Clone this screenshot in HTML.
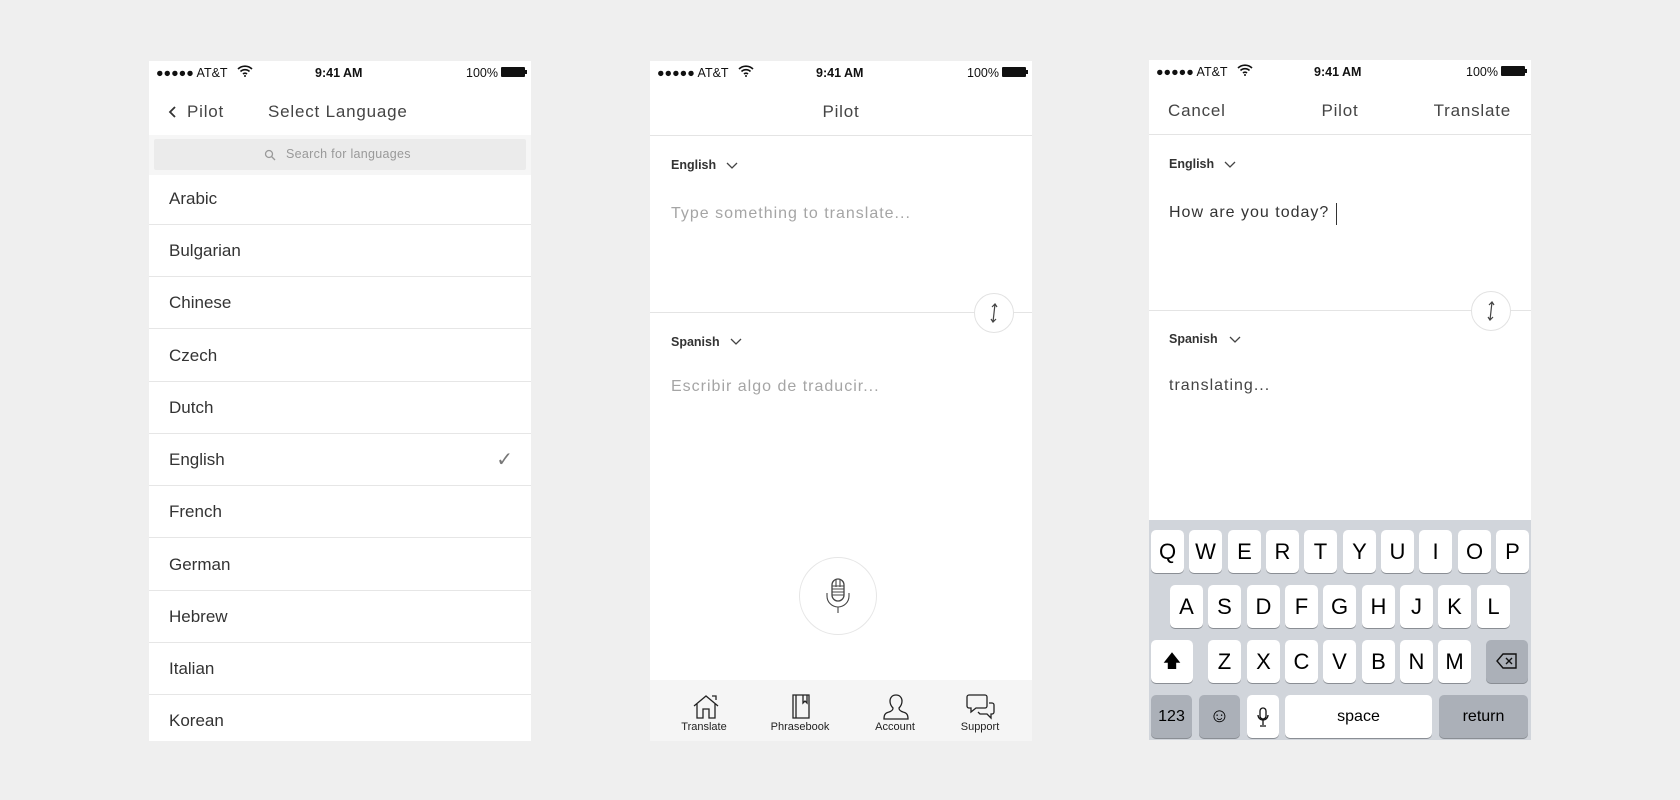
<!DOCTYPE html>
<html><head><meta charset="utf-8"><style>
*{margin:0;padding:0;box-sizing:border-box}
body{width:1680px;height:800px;background:#efefef;position:relative;overflow:hidden;font-family:"Liberation Sans",sans-serif;color:#333}
.ph{position:absolute;top:61px;width:382px;height:680px;background:#fff;overflow:hidden}
.a{position:absolute;white-space:nowrap}
.sb{font-size:12.5px;color:#111;top:5px}
.sep{position:absolute;left:0;right:0;height:1px;background:#e4e4e4}
.row{position:absolute;left:0;right:0;height:52px;border-bottom:1px solid #e6e6e6;font-size:17px;color:#333;padding-left:20px;line-height:52px}
.k{position:absolute;width:33px;height:43px;background:#fff;border-radius:5px;box-shadow:0 1px 0 #8a8e94;font-size:22px;color:#000;text-align:center;line-height:43px}
.g{background:#abb0b8}
.tab{position:absolute;top:45px;font-size:11px;color:#222;transform:translateX(-50%)}
.nav{font-size:17px;color:#444;letter-spacing:.8px}
.ph16{font-size:16px;letter-spacing:1px}
</style></head><body>

<!-- Phone 1 -->
<div class="ph" style="left:149px">
  <div class="a sb" style="left:7px">●●●●● AT&amp;T</div>
  <svg class="a" style="left:88px;top:4px" width="16" height="12" viewBox="0 0 16 12"><path d="M1 4a10 10 0 0 1 14 0M3.5 6.5a6.5 6.5 0 0 1 9 0M6 9a3 3 0 0 1 4 0" stroke="#111" stroke-width="1.6" fill="none"/><circle cx="8" cy="11" r="1" fill="#111"/></svg>
  <div class="a sb" style="left:166px;font-weight:bold">9:41 AM</div>
  <div class="a sb" style="left:317px">100%</div>
  <div class="a" style="left:352px;top:6px;width:24px;height:10px;background:#111;border-radius:1px"></div>
  <div class="a" style="left:376px;top:9px;width:2px;height:4px;background:#111"></div>
  <svg class="a" style="left:19px;top:44px" width="10" height="14" viewBox="0 0 10 14"><path d="M7 2L2 7l5 5" stroke="#333" stroke-width="1.8" fill="none"/></svg>
  <div class="a nav" style="left:38px;top:41px">Pilot</div>
  <div class="a nav" style="left:119px;top:41px">Select Language</div>
  <div class="a" style="left:0;right:0;top:74px;height:40px;background:#f6f6f6"></div>
  <div class="a" style="left:5px;right:5px;top:78px;height:31px;background:#ebebeb;border-radius:2px"></div>
  <svg class="a" style="left:115px;top:88px" width="12" height="12" viewBox="0 0 12 12"><circle cx="5" cy="5" r="3.5" stroke="#999" stroke-width="1.3" fill="none"/><path d="M7.5 7.5L11 11" stroke="#999" stroke-width="1.3"/></svg>
  <div class="a" style="left:137px;top:86px;font-size:12.5px;color:#999;letter-spacing:.3px">Search for languages</div>
  <div class="row" style="top:112px">Arabic</div>
  <div class="row" style="top:164px">Bulgarian</div>
  <div class="row" style="top:216px">Chinese</div>
  <div class="row" style="top:269px">Czech</div>
  <div class="row" style="top:321px">Dutch</div>
  <div class="row" style="top:373px">English<span style="position:absolute;right:18px;color:#777;font-size:20px">✓</span></div>
  <div class="row" style="top:425px">French</div>
  <div class="row" style="top:478px">German</div>
  <div class="row" style="top:530px">Hebrew</div>
  <div class="row" style="top:582px">Italian</div>
  <div class="row" style="top:634px;border:0">Korean</div>
</div>

<!-- Phone 2 -->
<div class="ph" style="left:650px">
  <div class="a sb" style="left:7px">●●●●● AT&amp;T</div>
  <svg class="a" style="left:88px;top:4px" width="16" height="12" viewBox="0 0 16 12"><path d="M1 4a10 10 0 0 1 14 0M3.5 6.5a6.5 6.5 0 0 1 9 0M6 9a3 3 0 0 1 4 0" stroke="#111" stroke-width="1.6" fill="none"/><circle cx="8" cy="11" r="1" fill="#111"/></svg>
  <div class="a sb" style="left:166px;font-weight:bold">9:41 AM</div>
  <div class="a sb" style="left:317px">100%</div>
  <div class="a" style="left:352px;top:6px;width:24px;height:10px;background:#111;border-radius:1px"></div>
  <div class="a" style="left:376px;top:9px;width:2px;height:4px;background:#111"></div>
  <div class="a nav" style="left:0;right:0;top:41px;text-align:center">Pilot</div>
  <div class="sep" style="top:74px"></div>
  <div class="a" style="left:21px;top:97px;font-size:12.5px;color:#333;font-weight:bold">English</div>
  <svg class="a" style="left:76px;top:101px" width="12" height="8" viewBox="0 0 12 8"><path d="M1 1l5 5 5-5" stroke="#444" stroke-width="1.3" fill="none"/></svg>
  <div class="a ph16" style="left:21px;top:144px;color:#a5a5a5">Type something to translate...</div>
  <div class="sep" style="top:251px"></div>
  <div class="a" style="left:324px;top:232px;width:40px;height:40px;border-radius:50%;background:#fff;border:1px solid #e2e2e2"></div>
  <svg class="a" style="left:336px;top:241px" width="16" height="22" viewBox="0 0 16 22"><path d="M9 2L7 20M6 5l3-3 2 3M5 17l2 3 3-3" stroke="#444" stroke-width="1.2" fill="none"/></svg>
  <div class="a" style="left:21px;top:274px;font-size:12.5px;color:#333;font-weight:bold">Spanish</div>
  <svg class="a" style="left:80px;top:277px" width="12" height="8" viewBox="0 0 12 8"><path d="M1 1l5 5 5-5" stroke="#444" stroke-width="1.3" fill="none"/></svg>
  <div class="a ph16" style="left:21px;top:317px;color:#a5a5a5">Escribir algo de traducir...</div>
  <div class="a" style="left:149px;top:496px;width:78px;height:78px;border-radius:50%;border:1px solid #e6e6e6"></div>
  <svg class="a" style="left:174px;top:517px" width="28" height="36" viewBox="0 0 28 36"><rect x="8" y="1" width="12" height="22" rx="6" stroke="#444" stroke-width="1.3" fill="none"/><path d="M8 8h12M8 11h12M8 14h12M8 17h12M12 1v8M16 1v8M3 15v3a11 11 0 0 0 22 0v-3M14 29v6" stroke="#444" stroke-width="1.1" fill="none"/></svg>
  <div class="a" style="left:0;right:0;top:619px;height:61px;background:#f5f5f5"></div>
  <svg class="a" style="left:42px;top:633px" width="28" height="26" viewBox="0 0 28 26"><path d="M2 12L14 2l12 10M5 10v14h6v-9h6v9h6V10M20 2h4v4" stroke="#222" stroke-width="1.3" fill="none"/></svg>
  <svg class="a" style="left:140px;top:632px" width="22" height="26" viewBox="0 0 22 26"><path d="M3 2h16v23H3zM6 2v23M13 2v8l2-2 2 2V2" stroke="#222" stroke-width="1.3" fill="none"/></svg>
  <svg class="a" style="left:232px;top:632px" width="28" height="27" viewBox="0 0 28 27"><path d="M14 2c-4 0-6 3-6 6s1 5 3 7c0 2-1 3-4 4-4 1-5 3-5 7h24c0-4-1-6-5-7-3-1-4-2-4-4 2-2 3-4 3-7s-2-6-6-6z" stroke="#222" stroke-width="1.3" fill="none"/></svg>
  <svg class="a" style="left:316px;top:632px" width="30" height="27" viewBox="0 0 30 27"><path d="M3 2h16a2 2 0 0 1 2 2v9a2 2 0 0 1-2 2H10l-5 4v-4H3a2 2 0 0 1-2-2V4a2 2 0 0 1 2-2zM23 10h3a2 2 0 0 1 2 2v7a2 2 0 0 1-2 2h-1v4l-4-4h-7l-2-2" stroke="#222" stroke-width="1.3" fill="none"/></svg>
  <div class="tab" style="left:54px;top:660px">Translate</div>
  <div class="tab" style="left:150px;top:660px">Phrasebook</div>
  <div class="tab" style="left:245px;top:660px">Account</div>
  <div class="tab" style="left:330px;top:660px">Support</div>
</div>

<!-- Phone 3 -->
<div class="ph" style="left:1149px;top:60px">
  <div class="a sb" style="left:7px">●●●●● AT&amp;T</div>
  <svg class="a" style="left:88px;top:4px" width="16" height="12" viewBox="0 0 16 12"><path d="M1 4a10 10 0 0 1 14 0M3.5 6.5a6.5 6.5 0 0 1 9 0M6 9a3 3 0 0 1 4 0" stroke="#111" stroke-width="1.6" fill="none"/><circle cx="8" cy="11" r="1" fill="#111"/></svg>
  <div class="a sb" style="left:165px;font-weight:bold">9:41 AM</div>
  <div class="a sb" style="left:317px">100%</div>
  <div class="a" style="left:352px;top:6px;width:24px;height:10px;background:#111;border-radius:1px"></div>
  <div class="a" style="left:376px;top:9px;width:2px;height:4px;background:#111"></div>
  <div class="a nav" style="left:19px;top:41px">Cancel</div>
  <div class="a nav" style="left:0;right:0;top:41px;text-align:center">Pilot</div>
  <div class="a nav" style="right:20px;top:41px">Translate</div>
  <div class="sep" style="top:74px"></div>
  <div class="a" style="left:20px;top:97px;font-size:12.5px;color:#333;font-weight:bold">English</div>
  <svg class="a" style="left:75px;top:101px" width="12" height="8" viewBox="0 0 12 8"><path d="M1 1l5 5 5-5" stroke="#444" stroke-width="1.3" fill="none"/></svg>
  <div class="a ph16" style="left:20px;top:144px;color:#333">How are you today?</div>
  <div class="a" style="left:187px;top:143px;width:1px;height:22px;background:#333"></div>
  <div class="sep" style="top:250px"></div>
  <div class="a" style="left:322px;top:231px;width:40px;height:40px;border-radius:50%;background:#fff;border:1px solid #e2e2e2"></div>
  <svg class="a" style="left:334px;top:240px" width="16" height="22" viewBox="0 0 16 22"><path d="M9 2L7 20M6 5l3-3 2 3M5 17l2 3 3-3" stroke="#444" stroke-width="1.2" fill="none"/></svg>
  <div class="a" style="left:20px;top:272px;font-size:12.5px;color:#333;font-weight:bold">Spanish</div>
  <svg class="a" style="left:80px;top:276px" width="12" height="8" viewBox="0 0 12 8"><path d="M1 1l5 5 5-5" stroke="#444" stroke-width="1.3" fill="none"/></svg>
  <div class="a ph16" style="left:20px;top:317px;color:#444">translating...</div>
  <div class="a" style="left:0;right:0;top:460px;height:220px;background:#d1d5db">
    <div class="k" style="left:2px;top:10px">Q</div><div class="k" style="left:40px;top:10px">W</div><div class="k" style="left:79px;top:10px">E</div><div class="k" style="left:117px;top:10px">R</div><div class="k" style="left:155px;top:10px">T</div><div class="k" style="left:194px;top:10px">Y</div><div class="k" style="left:232px;top:10px">U</div><div class="k" style="left:270px;top:10px">I</div><div class="k" style="left:309px;top:10px">O</div><div class="k" style="left:347px;top:10px">P</div>
    <div class="k" style="left:21px;top:65px">A</div><div class="k" style="left:59px;top:65px">S</div><div class="k" style="left:98px;top:65px">D</div><div class="k" style="left:136px;top:65px">F</div><div class="k" style="left:174px;top:65px">G</div><div class="k" style="left:213px;top:65px">H</div><div class="k" style="left:251px;top:65px">J</div><div class="k" style="left:289px;top:65px">K</div><div class="k" style="left:328px;top:65px">L</div>
    <div class="k" style="left:2px;top:120px;width:42px;font-size:18px">🡅</div>
    <div class="k" style="left:59px;top:120px">Z</div><div class="k" style="left:98px;top:120px">X</div><div class="k" style="left:136px;top:120px">C</div><div class="k" style="left:174px;top:120px">V</div><div class="k" style="left:213px;top:120px">B</div><div class="k" style="left:251px;top:120px">N</div><div class="k" style="left:289px;top:120px">M</div>
    <div class="k g" style="left:337px;top:120px;width:42px"><svg width="22" height="16" viewBox="0 0 22 16" style="margin-top:13px"><path d="M7 1h13v14H7L1 8z" stroke="#111" stroke-width="1.4" fill="none"/><path d="M10 5l6 6M16 5l-6 6" stroke="#111" stroke-width="1.4"/></svg></div>
    <div class="k g" style="left:2px;top:175px;width:41px;font-size:16px">123</div>
    <div class="k g" style="left:50px;top:175px;width:41px;font-size:20px">☺</div>
    <div class="k" style="left:98px;top:175px;width:32px"><svg width="12" height="20" viewBox="0 0 12 20" style="margin-top:12px"><rect x="3" y="1" width="6" height="11" rx="3" stroke="#111" stroke-width="1.3" fill="none"/><path d="M1 8a5 5 0 0 0 10 0M6 13v5M3 19h6" stroke="#111" stroke-width="1.3" fill="none"/></svg></div>
    <div class="k" style="left:136px;top:175px;width:147px;font-size:16px">space</div>
    <div class="k g" style="left:290px;top:175px;width:89px;font-size:16px">return</div>
  </div>
</div>
</body></html>
